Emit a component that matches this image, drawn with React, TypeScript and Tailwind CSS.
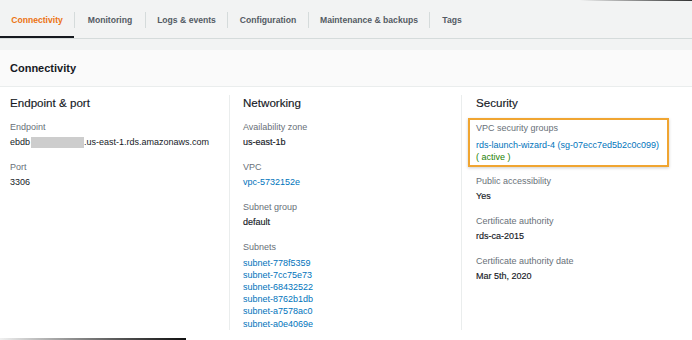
import React from "react";

const tabs = [
  { label: "Connectivity", w: "w-[74px]", active: true },
  { label: "Monitoring", w: "w-[70px]" },
  { label: "Logs & events", w: "w-[81px]" },
  { label: "Configuration", w: "w-[80px]" },
  { label: "Maintenance & backups", w: "w-[120px]" },
  { label: "Tags", w: "w-[44px]" },
];

const subnets = [
  "subnet-778f5359",
  "subnet-7cc75e73",
  "subnet-68432522",
  "subnet-8762b1db",
  "subnet-a7578ac0",
  "subnet-a0e4069e",
];

function Label({ children, className = "" }: { children: React.ReactNode; className?: string }) {
  return <div className={`text-[9px] leading-[15px] text-[#687078] ${className}`}>{children}</div>;
}

function Value({ children, strong = false }: { children: React.ReactNode; strong?: boolean }) {
  return (
    <div
      className={`text-[9px] leading-[15px] text-[#16191f] ${strong ? "[-webkit-text-stroke:0.15px_#16191f]" : ""}`}
    >
      {children}
    </div>
  );
}

function Heading({ children }: { children: React.ReactNode }) {
  return (
    <div className="text-[11.6px] leading-[16px] text-[#16191f] [-webkit-text-stroke:0.15px_#16191f]">
      {children}
    </div>
  );
}

export default function App() {
  return (
    <div
      className="w-[692px] h-[340px] overflow-hidden bg-white flex flex-col"
      style={{ fontFamily: '"Liberation Sans", Arial, sans-serif' }}
    >
      <div className="bg-[#f2f3f3] flex flex-col">
        <div className="h-px flex justify-end">
          <div className="w-[112px] h-px bg-gradient-to-r from-[#f2f3f3] to-[#333]" />
        </div>
        <div className="flex h-[37px] items-stretch">
          {tabs.map((t, i) => (
            <React.Fragment key={t.label}>
              {i > 0 && <div className="w-px h-[16px] bg-[#d5dbdb] self-center mt-[1px]" />}
              <div
                className={`${t.w} flex items-center justify-center pt-[3px] border-b-2 text-[8.6px] font-bold whitespace-nowrap ${
                  t.active ? "border-[#16191f] text-[#ec7211]" : "border-transparent text-[#545b64]"
                }`}
              >
                {t.label}
              </div>
            </React.Fragment>
          ))}
        </div>
        <div className="h-px bg-[#d5dbdb]" />
        <div className="h-[11px]" />
      </div>

      <div className="h-[37px] bg-[#fafafa] border-b border-[#eaeded] flex items-center px-[10px] text-[11px] font-bold text-[#16191f]">
        Connectivity
      </div>

      <div className="flex-1 flex pt-[8px] items-start">
        {/* Column 1 */}
        <div className="w-[229px] h-[235px] pl-[10px]">
          <Heading>Endpoint &amp; port</Heading>
          <Label className="mt-[9px]">Endpoint</Label>
          <div className="text-[9px] leading-[15px] text-[#16191f] flex items-center whitespace-nowrap">
            <span>ebdb</span>
            <span className="inline-block w-[53px] h-[11px] bg-[#cdcdcd] blur-[0.6px] ml-px" />
            <span>.us-east-1.rds.amazonaws.com</span>
          </div>
          <Label className="mt-[10px]">Port</Label>
          <Value>3306</Value>
        </div>

        {/* Column 2 */}
        <div className="w-[232px] h-[235px] border-l border-[#eaeded] pl-[13px]">
          <Heading>Networking</Heading>
          <Label className="mt-[9px]">Availability zone</Label>
          <Value strong>us-east-1b</Value>
          <Label className="mt-[10px]">VPC</Label>
          <div className="text-[9px] leading-[15px] text-[#0073bb]">vpc-5732152e</div>
          <Label className="mt-[10px]">Subnet group</Label>
          <Value strong>default</Value>
          <Label className="mt-[10px]">Subnets</Label>
          <div className="mt-[1.5px] flex flex-col">
            {subnets.map((s) => (
              <div key={s} className="text-[9px] leading-[12.2px] text-[#0073bb]">
                {s}
              </div>
            ))}
          </div>
        </div>

        {/* Column 3 */}
        <div className="flex-1 h-[235px] border-l border-[#eaeded] pl-[14px]">
          <Heading>Security</Heading>
          <div className="mt-[7px] -ml-[8px] w-[201px] border-2 border-[#f0a531] px-[6px] pt-[1px] pb-[2px] shadow-[0_1px_3px_rgba(0,0,0,0.2)]">
            <Label>VPC security groups</Label>
            <div className="mt-[3px] text-[9px] leading-[12px] text-[#0073bb] whitespace-nowrap">
              rds-launch-wizard-4 (sg-07ecc7ed5b2c0c099)
            </div>
            <div className="text-[9px] leading-[12px] text-[#1d8102]">( active )</div>
          </div>
          <Label className="mt-[7px]">Public accessibility</Label>
          <Value strong>Yes</Value>
          <Label className="mt-[10px]">Certificate authority</Label>
          <Value strong>rds-ca-2015</Value>
          <Label className="mt-[10px]">Certificate authority date</Label>
          <Value strong>Mar 5th, 2020</Value>
        </div>
      </div>

      <div className="h-[2px] flex">
        <div className="w-[186px] h-[2px] bg-gradient-to-r from-[#f0f0f0] to-[#111]" />
      </div>
    </div>
  );
}
